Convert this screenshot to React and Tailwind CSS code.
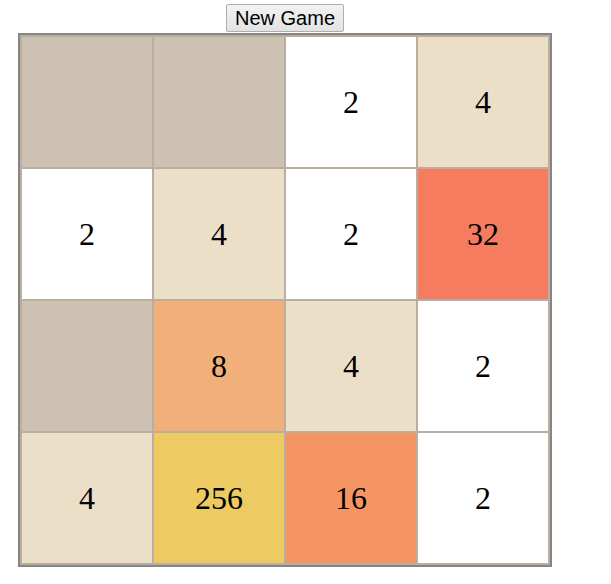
import React, { useState } from 'react';

const TILE_COLORS = {
  0: 'bg-[#cdc1b4]',
  2: 'bg-white',
  4: 'bg-[#ebdfc8]',
  8: 'bg-[#f1af79]',
  16: 'bg-[#f59563]',
  32: 'bg-[#f57c5f]',
  256: 'bg-[#edcb62]',
};

const START_BOARD = [
  [0, 0, 2, 4],
  [2, 4, 2, 32],
  [0, 8, 4, 2],
  [4, 256, 16, 2],
];

const Tile = ({ value }) => (
  <div
    className={`w-[130px] h-[130px] flex items-center justify-center text-[32px] text-black font-['Liberation_Serif','Times_New_Roman',serif] ${
      TILE_COLORS[value] || 'bg-[#edc22e]'
    }`}
  >
    {value > 0 ? value : ''}
  </div>
);

const App = () => {
  const [board, setBoard] = useState(START_BOARD);

  const newGame = () => {
    const fresh = Array.from({ length: 4 }, () => [0, 0, 0, 0]);
    let placed = 0;
    while (placed < 2) {
      const r = Math.floor(Math.random() * 4);
      const c = Math.floor(Math.random() * 4);
      if (!fresh[r][c]) {
        fresh[r][c] = Math.random() < 0.9 ? 2 : 4;
        placed++;
      }
    }
    setBoard(fresh);
  };

  return (
    <div className="bg-white min-h-[584px]">
      <div className="ml-[18px] w-[534px] flex flex-col">
        {/* new game button */}
        <button
          onClick={newGame}
          className="self-center mt-[4px] mb-[1px] h-[28px] px-[8px] text-[20px] leading-none text-black font-['Liberation_Sans',Arial,sans-serif] bg-gradient-to-b from-[#f2f2f2] to-[#e3e3e3] border border-[#adadad] rounded-[2px]"
        >
          New Game
        </button>

        {/* board */}
        <div className="border-2 border-[#878583] bg-[#bbada0] p-[2px]">
          <div className="grid grid-cols-4 gap-[2px]">
            {board.flat().map((v, i) => (
              <Tile key={i} value={v} />
            ))}
          </div>
        </div>
      </div>
    </div>
  );
};

export default App;
